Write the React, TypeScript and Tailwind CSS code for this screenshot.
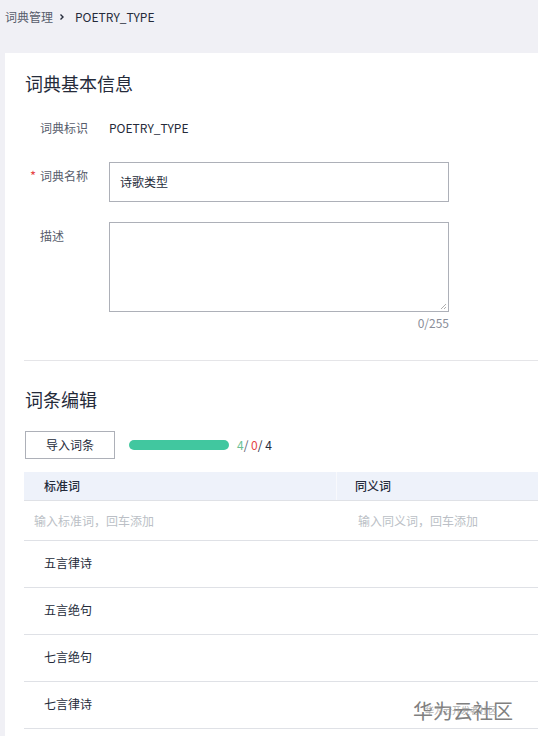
import React from "react";

const font = { fontFamily: '"Noto Sans CJK SC", "Noto Sans", sans-serif' };

function Row({ label, required, children }: { label: string; required?: boolean; children: React.ReactNode }) {
  return (
    <div className="flex">
      <div className="w-[85px] shrink-0 flex pt-[4px] h-[24px] leading-[20px] text-[12px] text-[#575d6c]">
        <span className="w-[16px] text-[#e54545] text-[13px] pl-[6px]">{required ? "*" : ""}</span>
        <span>{label}</span>
      </div>
      {children}
    </div>
  );
}

export default function App() {
  const rows = ["五言律诗", "五言绝句", "七言绝句", "七言律诗"];
  return (
    <div className="min-h-[736px] w-[538px] bg-[#f0f0f5] overflow-hidden relative" style={font}>
      <div className="h-[34px] flex items-center pl-[5px] text-[12px]">
        <span className="text-[#575d6c]">词典管理</span>
        <svg width="14" height="14" viewBox="0 0 14 14" className="mx-[2px]">
          <path d="M5.5 4.5 L8 7 L5.5 9.5" fill="none" stroke="#252b3a" strokeWidth="1.4" />
        </svg>
        <span className="text-[#252b3a] ml-[4px]">POETRY_TYPE</span>
      </div>
      <div className="mt-[19px] ml-[5px] bg-white pl-[19px] pb-[20px] min-h-[683px]">
        <div className="pt-[17px]">
          <div className="h-[26px] leading-[26px] text-[18px] text-[#252b3a] pl-[1px]">词典基本信息</div>
        </div>
        <div className="mt-[20px] flex h-[24px] items-center text-[12px]">
          <div className="w-[85px] pl-[16px] text-[#575d6c]">词典标识</div>
          <div className="text-[#252b3a]">POETRY_TYPE</div>
        </div>
        <div className="mt-[22px]">
          <Row label="词典名称" required>
            <div className="w-[340px] h-[40px] border border-[#adb0b8] flex items-center pl-[10px] text-[12px] text-[#252b3a]">
              诗歌类型
            </div>
          </Row>
        </div>
        <div className="mt-[20px]">
          <Row label="描述">
            <div className="w-[340px]">
              <div className="h-[90px] border border-[#adb0b8] relative">
                <svg width="8" height="8" viewBox="0 0 8 8" className="absolute right-[1px] bottom-[1px]">
                  <path d="M7 2 L2 7 M7 5 L5 7" stroke="#9a9a9a" strokeWidth="0.8" />
                </svg>
              </div>
              <div className="mt-[3px] text-right text-[12px] leading-[16px] text-[#8a8e99]">0/255</div>
            </div>
          </Row>
        </div>
        <div className="mt-[29px] border-t border-[#e5e5e8]" />
        <div className="mt-[25px] h-[26px] leading-[26px] text-[18px] text-[#252b3a] pl-[1px]">词条编辑</div>
        <div className="mt-[19px] flex items-center pl-[1px]">
          <div className="w-[90px] h-[28px] border border-[#adb0b8] flex items-center justify-center text-[12px] text-[#252b3a]">
            导入词条
          </div>
          <div className="ml-[14px] w-[100px] h-[10px] rounded-full bg-[#41c79f]" />
          <div className="ml-[8px] text-[12px] text-[#252b3a]">
            <span className="text-[#6cbf95]">4</span>
            <span className="text-[#575d6c]">/ </span>
            <span className="text-[#e54545]">0</span>
            <span>/ 4</span>
          </div>
        </div>
        <div className="mt-[13px]">
          <div className="flex h-[29px] bg-[#eef2fa] border-b border-[#dfe1e6] text-[12px] font-medium text-[#252b3a]">
            <div className="w-[313px] flex items-center pl-[20px] border-r border-[#f8f9fc]">标准词</div>
            <div className="flex-1 flex items-center pl-[18px]">同义词</div>
          </div>
          <div className="flex h-[40px] border-b border-[#dfe1e6] text-[12px] text-[#bbbfc6]">
            <div className="w-[313px] flex items-center pl-[10px]">输入标准词，回车添加</div>
            <div className="flex-1 flex items-center pl-[21px]">输入同义词，回车添加</div>
          </div>
          {rows.map((r) => (
            <div key={r} className="flex h-[47px] border-b border-[#dfe1e6] text-[12px] text-[#252b3a]">
              <div className="w-[313px] flex items-center pl-[20px] pb-[3px]">{r}</div>
              <div className="flex-1" />
            </div>
          ))}
        </div>
      </div>
      <div className="absolute left-[413px] top-[697px] w-[110px] h-[28px] pointer-events-none">
        <div className="text-[20px] leading-[28px] text-[#808080]">华为云社区</div>
        <div className="absolute left-[12px] top-[9px] text-[9px] leading-[10px] text-[#9a9a9a] opacity-80 whitespace-nowrap">
          华为云开发者社区
        </div>
      </div>
    </div>
  );
}
